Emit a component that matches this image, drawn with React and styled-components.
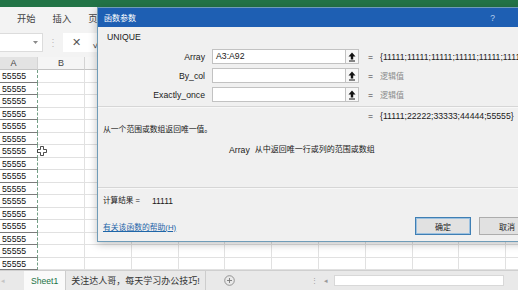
import React from 'react';
import styled, { createGlobalStyle, css } from 'styled-components';

const GlobalStyle = createGlobalStyle`
  *, *::before, *::after { box-sizing: border-box; }
  html, body { margin: 0; padding: 0; background: #fff; }
  body { font-family: 'Liberation Sans', 'Noto Sans CJK SC', sans-serif; }
`;

const Screen = styled.div`
  position: relative;
  width: 518px;
  height: 290px;
  overflow: hidden;
  display: flex;
  flex-direction: column;
  background: #fff;
`;

const TitleStrip = styled.div`
  flex: none;
  height: 7px;
  background: #237447;
`;

const RibbonTabs = styled.div`
  flex: none;
  height: 21px;
  display: flex;
  align-items: center;
  gap: 17px;
  padding-left: 17px;
  background: #f3f3f3;
  color: #444;
  font-size: 9.3px;
`;

const FormulaBar = styled.div`
  flex: none;
  height: 29px;
  display: flex;
  align-items: center;
  background: #f3f3f3;
`;

const NameBox = styled.div`
  width: 43px;
  height: 19px;
  display: flex;
  align-items: center;
  justify-content: flex-end;
  padding-right: 4px;
  background: #fff;
  border: 1px solid #dcdcdc;
  border-left: none;
`;

const GripDots = styled.div`
  width: 20px;
  text-align: center;
  color: #bdbdbd;
  font-size: 10px;
  line-height: 1;
`;

const FormulaTools = styled.div`
  width: 60px;
  height: 19px;
  display: flex;
  align-items: center;
  gap: 12px;
  padding-left: 9px;
  background: #fff;
  color: #555;
  font-size: 11px;
`;

const Sheet = styled.div`
  flex: none;
  height: 213px;
  overflow: hidden;
  display: grid;
  grid-template-columns: 38px 47px repeat(10, 46.8px);
  grid-template-rows: 13px repeat(16, 12.5px);
`;

const HeaderCell = styled.div`
  display: flex;
  align-items: center;
  justify-content: center;
  padding-right: ${p => (p.$first ? '10px' : '0')};
  background: ${p => (p.$selected ? '#e3e3e3' : '#f5f5f5')};
  border-right: 1px solid #d4d4d4;
  border-bottom: 1px solid #c4c4c4;
  color: #444;
  font-size: 9px;
`;

const Cell = styled.div`
  padding-left: 2px;
  line-height: 12.5px;
  font-size: 8.7px;
  color: #111;
  white-space: nowrap;
  overflow: hidden;
  border-right: 1px solid #e1e1e1;
  border-bottom: 1px solid #e1e1e1;
  ${p => p.$copied && css`
    border-bottom-color: #7c7c7c;
    border-right: 1px dashed #74a087;
  `}
`;

const TabBar = styled.div`
  flex: none;
  height: 20px;
  display: flex;
  align-items: stretch;
  background: #e9e9e9;
  border-top: 1px solid #cfcfcf;
  font-size: 9px;
`;

const TabNav = styled.div`
  width: 24px;
  display: flex;
  align-items: center;
  padding-left: 1px;
  color: #c4c4c4;
  font-size: 7px;
`;

const SheetTab = styled.div`
  display: flex;
  align-items: center;
  padding: 0 ${p => (p.$active ? '7px' : '5px')};
  background: ${p => (p.$active ? '#fafafa' : 'transparent')};
  color: ${p => (p.$active ? '#217346' : '#333')};
  border-right: 1px solid #cdcdcd;
  font-size: ${p => (p.$active ? '8.6px' : '9px')};
`;

const AddSheet = styled.div`
  width: 100px;
  display: flex;
  align-items: center;
  padding-left: 18px;
`;

const ScrollArea = styled.div`
  flex: 1;
  display: flex;
  align-items: center;
  padding-left: 5px;
  gap: 6px;
  color: #999;
  font-size: 7px;
`;

const ScrollTrack = styled.div`
  width: 170px;
  height: 11px;
  background: #fff;
  border: 1px solid #d8d8d8;
`;

const Dialog = styled.div`
  position: absolute;
  left: 97px;
  top: 7px;
  width: 446px;
  height: 235px;
  display: flex;
  flex-direction: column;
  background: #f0f0f0;
  border: 1px solid #6f9cb8;
  box-shadow: 0 2px 8px rgba(0, 0, 0, 0.25);
  color: #1a1a1a;
`;

const DialogTitle = styled.div`
  flex: none;
  height: 19px;
  display: flex;
  align-items: center;
  justify-content: space-between;
  padding: 0 12px 0 6px;
  background: #1e5fb3;
  color: #fff;
  font-size: 8px;
`;

const TitleButtons = styled.div`
  display: flex;
  gap: 27px;
  color: #b9d0ee;
  font-size: 8.5px;
`;

const FuncName = styled.div`
  margin-top: 5px;
  padding-left: 9px;
  line-height: 10px;
  font-size: 8.7px;
`;

const ArgList = styled.div`
  margin-top: 5px;
  display: flex;
  flex-direction: column;
`;

const ArgRow = styled.div`
  height: 19px;
  display: flex;
  align-items: center;
  font-size: 8.7px;
`;

const ArgLabel = styled.div`
  flex: none;
  width: 107px;
  text-align: right;
`;

const ArgInput = styled.div`
  flex: none;
  width: 133px;
  height: 15px;
  margin-left: 7px;
  padding-left: 3px;
  line-height: 13px;
  background: #fff;
  border: 1px solid #c2c2c2;
  border-right: none;
`;

const RefButton = styled.div`
  flex: none;
  width: 14px;
  height: 15px;
  display: flex;
  align-items: center;
  justify-content: center;
  background: #f7f7f7;
  border: 1px solid #c2c2c2;
`;

const Equals = styled.span`
  flex: none;
  width: 12px;
  margin-left: ${p => (p.$flush ? '0' : '9px')};
  color: #333;
`;

const ArgValue = styled.div`
  flex: 1;
  min-width: 0;
  overflow: hidden;
  white-space: nowrap;
  color: ${p => (p.$hint ? '#8c8c8c' : '#222')};
  font-size: ${p => (p.$hint ? '8px' : '8.7px')};
`;

const Divider = styled.div`
  margin-top: ${p => p.$gap}px;
  border-top: 1px solid #d6d6d6;
  border-bottom: 1px solid #f8f8f8;
`;

const ResultLine = styled.div`
  margin-top: 2px;
  padding-left: 270px;
  display: flex;
  line-height: 12px;
  font-size: 8.7px;
  white-space: nowrap;
`;

const FuncDesc = styled.div`
  margin-top: 2px;
  padding-left: 5px;
  line-height: 12px;
  font-size: 7.8px;
`;

const ArgDesc = styled.div`
  margin-top: 8px;
  padding-left: 131px;
  display: flex;
  gap: 5px;
  line-height: 12px;
  font-size: 8px;
`;

const ArgDescName = styled.span`
  font-size: 8.7px;
`;

const CalcResult = styled.div`
  margin-top: 6px;
  padding-left: 5px;
  display: flex;
  line-height: 12px;
  font-size: 7.6px;
`;

const CalcNumber = styled.span`
  margin-left: 12px;
  font-size: 8.5px;
`;

const DialogFooter = styled.div`
  margin-top: 10px;
  display: flex;
  align-items: center;
  gap: 8px;
  padding: 0 7px 0 5px;
`;

const HelpLink = styled.a`
  flex: 1;
  color: #1f66a8;
  font-size: 7.8px;
  text-decoration: underline;
`;

const DialogButton = styled.div`
  width: 56px;
  height: 18px;
  display: flex;
  align-items: center;
  justify-content: center;
  background: #e1e1e1;
  border: 1px solid ${p => (p.$default ? '#3f7fb4' : '#adadad')};
  box-shadow: ${p => (p.$default ? 'inset 0 0 0 1px #9cc1e0' : 'none')};
  font-size: 8px;
  color: #222;
`;

const CursorMark = styled.svg`
  position: absolute;
  left: 37px;
  top: 146px;
`;

const columns = ['A', 'B', 'C', 'D', 'E', 'F', 'G', 'H', 'I', 'J', 'K', 'L'];
const rowCount = 16;

const args = [
  { name: 'Array', value: 'A3:A92', result: '{11111;11111;11111;11111;11111;11111;11111}' },
  { name: 'By_col', value: '', result: '逻辑值', hint: true },
  { name: 'Exactly_once', value: '', result: '逻辑值', hint: true },
];

const DropArrow = () => (
  <svg width="5" height="3" viewBox="0 0 5 3">
    <path d="M0 0 H5 L2.5 3 Z" fill="#8a8a8a" />
  </svg>
);

const RefIcon = () => (
  <svg width="8" height="10" viewBox="0 0 8 10">
    <path d="M4 0.5 L7.5 4.5 H5.2 V7.5 H2.8 V4.5 H0.5 Z" fill="#111" />
    <path d="M1 9 H7" stroke="#111" strokeWidth="1" />
  </svg>
);

const PlusCircle = () => (
  <svg width="11" height="11" viewBox="0 0 11 11">
    <circle cx="5.5" cy="5.5" r="4.8" fill="none" stroke="#8a8a8a" strokeWidth="0.9" />
    <path d="M5.5 3 V8 M3 5.5 H8" stroke="#777" strokeWidth="0.9" />
  </svg>
);

const SheetGrid = () => (
  <Sheet>
    {columns.map((c, i) => (
      <HeaderCell key={c} $first={i === 0} $selected={i === 0}>{c}</HeaderCell>
    ))}
    {Array.from({ length: rowCount }).map((_, r) =>
      columns.map((c, i) => (
        <Cell key={`${c}${r}`} $copied={i === 0}>{i === 0 ? '55555' : ''}</Cell>
      ))
    )}
  </Sheet>
);

const FunctionArgsDialog = () => (
  <Dialog>
    <DialogTitle>
      <span>函数参数</span>
      <TitleButtons>
        <span>?</span>
        <span>✕</span>
      </TitleButtons>
    </DialogTitle>
    <FuncName>UNIQUE</FuncName>
    <ArgList>
      {args.map(a => (
        <ArgRow key={a.name}>
          <ArgLabel>{a.name}</ArgLabel>
          <ArgInput>{a.value}</ArgInput>
          <RefButton><RefIcon /></RefButton>
          <Equals>=</Equals>
          <ArgValue $hint={a.hint}>{a.result}</ArgValue>
        </ArgRow>
      ))}
    </ArgList>
    <Divider $gap={2} />
    <ResultLine>
      <Equals $flush>=</Equals>
      <span>{'{11111;22222;33333;44444;55555}'}</span>
    </ResultLine>
    <FuncDesc>从一个范围或数组返回唯一值。</FuncDesc>
    <ArgDesc>
      <ArgDescName>Array</ArgDescName>
      <span>从中返回唯一行或列的范围或数组</span>
    </ArgDesc>
    <Divider $gap={31} />
    <CalcResult>
      计算结果 =
      <CalcNumber>11111</CalcNumber>
    </CalcResult>
    <DialogFooter>
      <HelpLink>有关该函数的帮助(H)</HelpLink>
      <DialogButton $default>确定</DialogButton>
      <DialogButton>取消</DialogButton>
    </DialogFooter>
  </Dialog>
);

const App = () => (
  <Screen>
    <GlobalStyle />
    <TitleStrip />
    <RibbonTabs>
      <span>开始</span>
      <span>插入</span>
      <span>页面布局</span>
    </RibbonTabs>
    <FormulaBar>
      <NameBox><DropArrow /></NameBox>
      <GripDots>⋮</GripDots>
      <FormulaTools>
        <span>✕</span>
        <span>✓</span>
      </FormulaTools>
    </FormulaBar>
    <SheetGrid />
    <TabBar>
      <TabNav>◂</TabNav>
      <SheetTab $active>Sheet1</SheetTab>
      <SheetTab>关注达人哥，每天学习办公技巧!</SheetTab>
      <AddSheet><PlusCircle /></AddSheet>
      <ScrollArea>
        <span>⋮</span>
        <span>◂</span>
        <ScrollTrack />
      </ScrollArea>
    </TabBar>
    <FunctionArgsDialog />
    <CursorMark width="10" height="10" viewBox="0 0 10 10">
      <path d="M3.5 0.5 H6.5 V3.5 H9.5 V6.5 H6.5 V9.5 H3.5 V6.5 H0.5 V3.5 H3.5 Z" fill="#fff" stroke="#222" strokeWidth="0.8" />
    </CursorMark>
  </Screen>
);

export default App;
